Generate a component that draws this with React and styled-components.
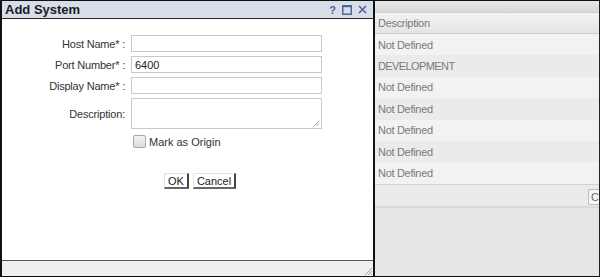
import React from "react";
import styled, { createGlobalStyle } from "styled-components";

const Global = createGlobalStyle`
  html, body {
    margin: 0;
    padding: 0;
    background: #fff;
    font-family: "Liberation Sans", Arial, sans-serif;
  }
`;

const Frame = styled.div`
  width: 600px;
  height: 277px;
  box-sizing: border-box;
  border-top: 1px solid #111;
  border-bottom: 1px solid #111;
  border-right: 1px solid #222;
  display: flex;
  overflow: hidden;
`;

const Dialog = styled.div`
  width: 375px;
  flex-shrink: 0;
  box-sizing: border-box;
  border-left: 2px solid #111;
  border-right: 2px solid #111;
  display: flex;
  flex-direction: column;
  background: #fff;
`;

const TitleBar = styled.div`
  height: 17px;
  background: #d7dee9;
  border-bottom: 1px solid #2a2a2a;
  display: flex;
  align-items: center;
  padding: 0 6px 0 3px;
`;

const Title = styled.div`
  flex: 1;
  font-size: 13px;
  font-weight: bold;
  color: #1c1c1c;
`;

const Tools = styled.div`
  display: flex;
  align-items: center;
  gap: 6px;
  color: #4d6290;
  font-size: 11px;
  font-weight: bold;
`;

const Body = styled.div`
  flex: 1;
  padding-top: 16px;
  display: flex;
  flex-direction: column;
`;

const Row = styled.div`
  display: flex;
  align-items: center;
  height: ${(p) => p.h || 17}px;
  margin-bottom: 4px;
`;

const Label = styled.div`
  width: 126px;
  text-align: right;
  font-size: 11px;
  color: #333;
  padding-right: 3px;
  box-sizing: border-box;
  letter-spacing: -0.2px;
`;

const Input = styled.div`
  width: 191px;
  height: 17px;
  box-sizing: border-box;
  border: 1px solid #c9c9c9;
  margin-left: 3px;
  font-size: 11px;
  color: #222;
  padding: 2px 3px;
`;

const TextArea = styled(Input)`
  height: 31px;
  position: relative;
`;

const Grip = styled.svg`
  position: absolute;
  right: 1px;
  bottom: 1px;
`;

const CheckRow = styled.div`
  display: flex;
  align-items: center;
  margin-left: 131px;
  margin-top: 2px;
  gap: 3px;
  font-size: 11px;
  color: #333;
`;

const Box = styled.div`
  width: 11px;
  height: 11px;
  border: 1px solid #a8a8a8;
  border-radius: 2px;
  background: linear-gradient(#f4f4f4, #dcdcdc);
`;

const Buttons = styled.div`
  display: flex;
  gap: 4px;
  margin-left: 162px;
  margin-top: 25px;
`;

const Button = styled.div`
  height: 16px;
  box-sizing: border-box;
  padding: 0 3px;
  display: flex;
  align-items: center;
  font-size: 11px;
  color: #222;
  background: #fff;
  border: 1px solid #e2e2e2;
  border-right: 2px solid #444;
  border-bottom: 2px solid #666;
`;

const Footer = styled.div`
  height: 15px;
  background: #efefef;
  border-top: 1px solid #555;
  display: flex;
  justify-content: flex-end;
  align-items: flex-end;
`;

const Panel = styled.div`
  flex: 1;
  background: #e5e5e5;
  display: flex;
  flex-direction: column;
`;

const TopStrip = styled.div`
  height: 11px;
  background: linear-gradient(#e8e8e8, #d9d9d9);
  border-bottom: 1px solid #cfcfcf;
`;

const HeadCell = styled.div`
  height: 20px;
  background: linear-gradient(#f3f3f3, #e4e4e4);
  border-bottom: 1px solid #cdcdcd;
  display: flex;
  align-items: center;
  padding-left: 3px;
  font-size: 11px;
  color: #7a7a7a;
  letter-spacing: -0.3px;
`;

const Cell = styled.div`
  height: 21.4px;
  background: ${(p) => (p.alt ? "#ebebeb" : "#f2f2f2")};
  display: flex;
  align-items: center;
  padding-left: 3px;
  font-size: 11px;
  color: #7a7a7a;
  letter-spacing: ${(p) => (p.caps ? "-0.6px" : "-0.3px")};
`;

const Toolbar = styled.div`
  height: 21px;
  background: #ebebeb;
  border-top: 1px solid #d2d2d2;
  border-bottom: 2px solid #d9d9d9;
  display: flex;
  justify-content: flex-end;
  align-items: flex-end;
`;

const ToolButton = styled.div`
  width: 8px;
  height: 14px;
  margin-bottom: 1px;
  border: 1px solid #bcbcbc;
  border-right: none;
  border-radius: 2px 0 0 2px;
  background: #f7f7f7;
  font-size: 11px;
  color: #666;
  padding-left: 2px;
  line-height: 14px;
  overflow: hidden;
`;

const rows = [
  "Not Defined",
  "DEVELOPMENT",
  "Not Defined",
  "Not Defined",
  "Not Defined",
  "Not Defined",
  "Not Defined",
];

export default function App() {
  return (
    <>
      <Global />
      <Frame>
        <Dialog>
          <TitleBar>
            <Title>Add System</Title>
            <Tools>
              <span>?</span>
              <svg width="10" height="10" viewBox="0 0 10 10">
                <rect x="0.75" y="0.75" width="8.5" height="8.5" fill="none" stroke="#4d6290" strokeWidth="1.4" />
                <line x1="0.5" y1="1.5" x2="9.5" y2="1.5" stroke="#4d6290" strokeWidth="1.4" />
              </svg>
              <svg width="9" height="9" viewBox="0 0 9 9">
                <path d="M1 1L8 8M8 1L1 8" stroke="#4d6290" strokeWidth="1.5" />
              </svg>
            </Tools>
          </TitleBar>
          <Body>
            <Row>
              <Label>Host Name* :</Label>
              <Input />
            </Row>
            <Row>
              <Label>Port Number* :</Label>
              <Input>6400</Input>
            </Row>
            <Row>
              <Label>Display Name* :</Label>
              <Input />
            </Row>
            <Row h={31}>
              <Label>Description:</Label>
              <TextArea>
                <Grip width="7" height="7" viewBox="0 0 7 7">
                  <path d="M6 1L1 6M6 3.5L3.5 6" stroke="#888" strokeWidth="0.8" />
                </Grip>
              </TextArea>
            </Row>
            <CheckRow>
              <Box />
              <span>Mark as Origin</span>
            </CheckRow>
            <Buttons>
              <Button>OK</Button>
              <Button>Cancel</Button>
            </Buttons>
          </Body>
          <Footer>
            <svg width="10" height="10" viewBox="0 0 10 10">
              <path d="M9 2L2 9M9 5L5 9M9 8L8 9" stroke="#999" strokeWidth="0.9" />
            </svg>
          </Footer>
        </Dialog>
        <Panel>
          <TopStrip />
          <HeadCell>Description</HeadCell>
          {rows.map((r, i) => (
            <Cell key={i} alt={i % 2 === 1} caps={r === "DEVELOPMENT"}>
              {r}
            </Cell>
          ))}
          <Toolbar>
            <ToolButton>C</ToolButton>
          </Toolbar>
        </Panel>
      </Frame>
    </>
  );
}
